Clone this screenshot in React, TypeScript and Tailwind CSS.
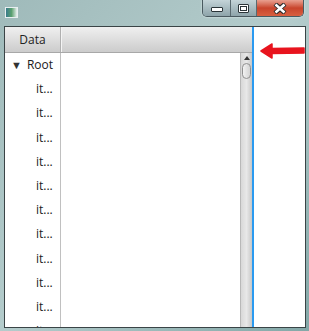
import React from "react"

const rows = Array.from({ length: 11 })

const TitleBar = () => (
  <div className="relative h-[26px]">
    <div className="absolute left-[5px] top-[7px] h-[11px] w-[13px] border border-[#e8eef0] bg-gradient-to-r from-[#3a7a8a] via-[#5aa070] to-[#e8f0f0]" />
    <div className="absolute right-[5px] top-0 flex h-[17px] overflow-hidden rounded-b-[5px] border border-t-0 border-[#4a5a60] shadow-[0_0_2px_rgba(255,255,255,0.8)]">
      <div className="flex w-[28px] items-end justify-center border-r border-[#5a6a70] bg-gradient-to-b from-[#c4d4d8] to-[#8ea4aa] pb-[4px]">
        <div className="h-[5px] w-[12px] rounded-[1px] border border-[#2a3438] bg-white" />
      </div>
      <div className="flex w-[26px] items-center justify-center border-r border-[#5a6a70] bg-gradient-to-b from-[#c4d4d8] to-[#8ea4aa]">
        <div className="h-[9px] w-[11px] rounded-[1px] border border-[#2a3438] bg-white p-[1px]">
          <div className="h-full w-full border border-[#2a3438]" />
        </div>
      </div>
      <div className="flex w-[46px] items-center justify-center bg-gradient-to-b from-[#e8a090] via-[#c8442c] to-[#d86040]">
        <svg width="14" height="11" viewBox="0 0 14 11">
          <path d="M2 1 L7 5 L12 1 M2 10 L7 6 L12 10" stroke="#2a2a2a" strokeWidth="4.5" fill="none" />
          <path d="M2.5 1.5 L11.5 9.5 M11.5 1.5 L2.5 9.5" stroke="#fff" strokeWidth="2.5" fill="none" />
        </svg>
      </div>
    </div>
  </div>
)

const Scrollbar = () => (
  <div className="flex w-[12px] flex-col border-l border-[#b8b8b8] bg-gradient-to-r from-[#d8d8d8] via-[#e8e8e8] to-[#c8c8c8]">
    <div className="flex h-[10px] items-center justify-center">
      <div className="h-0 w-0 border-x-[3px] border-b-[4px] border-x-transparent border-b-[#333]" />
    </div>
    <div className="mx-[1px] h-[16px] rounded-[5px] border border-[#909090] bg-gradient-to-r from-[#f2f2f2] to-[#d4d4d4]" />
  </div>
)

export default function App() {
  return (
    <div className="flex h-[331px] w-[309px] flex-col overflow-hidden bg-gradient-to-br from-[#9fbaba] via-[#b4cccc] to-[#84a8a8] [font-family:'Open_Sans',sans-serif]">
      <TitleBar />
      <div className="ml-[4px] mr-[3px] flex h-[302px] border border-[#3a4446] bg-white">
        <div className="flex w-[247px] flex-col">
          <div className="flex h-[26px] shrink-0 border-b border-[#a8a8a8] bg-gradient-to-b from-[#f0f0f0] to-[#cccccc]">
            <div className="flex w-[56px] items-center justify-center border-r border-[#b0b0b0] text-[12px] text-[#222]">
              Data
            </div>
            <div className="flex-1 border-l border-[#f4f4f4]" />
          </div>
          <div className="flex flex-1 overflow-hidden">
            <div className="flex w-[56px] flex-col border-r border-[#c0c0c0] text-[12px] text-[#1a1a1a]">
              <div className="flex h-[24.2px] shrink-0 items-center pl-[6px]">
                <span className="mr-[5px] text-[11px] text-[#333]">▼</span>
                Root
              </div>
              {rows.map((_, i) => (
                <div key={i} className="flex h-[24.2px] shrink-0 items-center pl-[31px]">
                  it...
                </div>
              ))}
            </div>
            <div className="flex-1" />
            <Scrollbar />
          </div>
        </div>
        <div className="w-[2px] bg-[#2a9af0]" />
        <div className="relative flex-1">
          <svg className="absolute left-[6px] top-[16px]" width="46" height="16" viewBox="0 0 46 16">
            <path d="M1 8 L12 1 L12 5.5 L44 5 L44 10 L12 10.5 L12 15 Z" fill="#e8141e" strokeLinejoin="round" stroke="#e8141e" strokeWidth="1.5" />
          </svg>
        </div>
      </div>
    </div>
  )
}
